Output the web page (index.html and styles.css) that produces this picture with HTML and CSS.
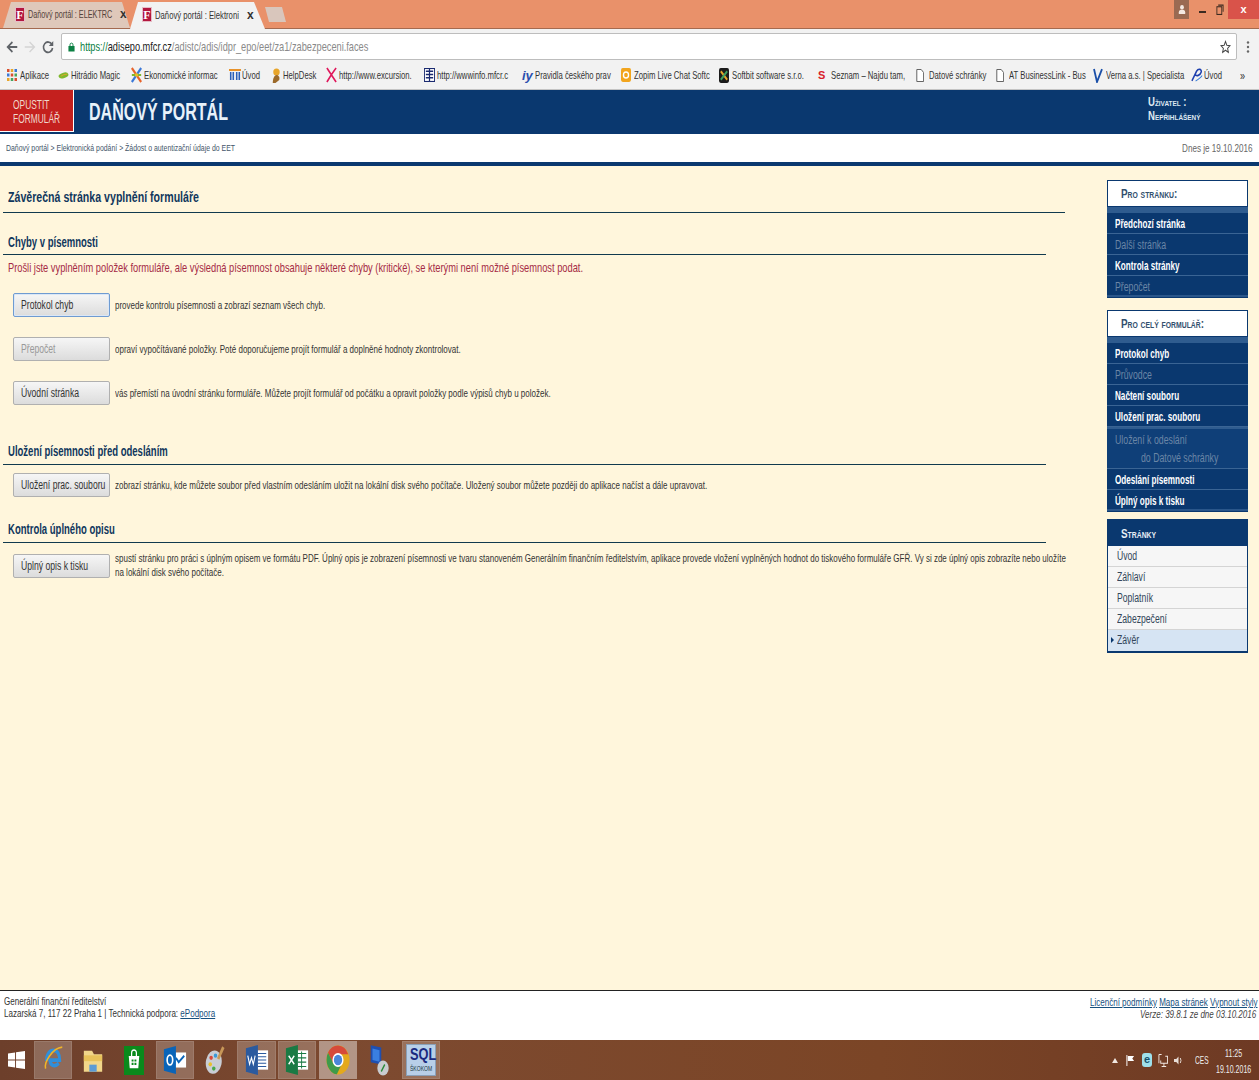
FILE: index.html
```html
<!DOCTYPE html>
<html lang="cs">
<head>
<meta charset="utf-8">
<title>Daňový portál</title>
<link rel="stylesheet" href="styles.css">
</head>
<body>
<div class="screen">
  <div class="tabstrip">
    <div class="tab tab-bg">
      <span class="favicon">F</span><span class="tab-title"><span class="sq">Daňový portál : ELEKTRC</span></span><span class="tab-x">x</span>
    </div>
    <div class="tab tab-active">
      <span class="favicon">F</span><span class="tab-title"><span class="sq">Daňový portál : Elektroni</span></span><span class="tab-x">x</span>
    </div>
    <div class="tab-new"></div>
    <div class="win-controls">
      <span class="win-user"><svg width="8" height="11" viewBox="0 0 10 12" preserveAspectRatio="none"><circle cx="5" cy="3.500" r="2.400" fill="#f4e9e2"/><path d="M1 11V9c0-2 2-2.600 4-2.600S9 7 9 9v2z" fill="#f4e9e2"/></svg></span>
      <span class="win-btn"><svg width="7" height="8" viewBox="0 0 8 8" preserveAspectRatio="none"><rect x="0" y="5" width="8" height="2" fill="#3c2a20"/></svg></span>
      <span class="win-btn"><svg width="8" height="11" viewBox="0 0 9 10" preserveAspectRatio="none"><rect x="1" y="2.500" width="5.500" height="7" fill="none" stroke="#3c2a20"/><path d="M2.500 1H8v6" fill="none" stroke="#3c2a20"/></svg></span>
      <span class="win-close">x</span>
    </div>
  </div>

  <div class="toolbar">
    <svg class="nav" width="14" height="16" viewBox="0 0 16 16" preserveAspectRatio="none"><path d="M14 8H3.500M8.500 3 3 8l5.500 5" fill="none" stroke="#5f6368" stroke-width="1.800"/></svg>
    <svg class="nav" width="14" height="16" viewBox="0 0 16 16" preserveAspectRatio="none"><path d="M2 8h10.500M7.500 3 13 8l-5.500 5" fill="none" stroke="#d4d4d4" stroke-width="1.600"/></svg>
    <svg class="nav" width="14" height="16" viewBox="0 0 16 16" preserveAspectRatio="none"><path d="M12.500 5.500A5.200 5.200 0 1 0 13.200 9" fill="none" stroke="#5f6368" stroke-width="1.800"/><path d="M14 2v5H9z" fill="#5f6368"/></svg>
    <div class="omnibox">
      <svg width="7" height="10" viewBox="0 0 8 10" preserveAspectRatio="none"><rect x="0.500" y="4" width="7" height="5.500" fill="#0b8043"/><path d="M2.300 4V2.800a1.700 1.700 0 0 1 3.400 0V4" fill="none" stroke="#0b8043"/></svg>
      <span class="url"><span class="sq"><span class="url-https">https://</span><span class="url-host">adisepo.mfcr.cz</span>/adistc/adis/idpr_epo/eet/za1/zabezpeceni.faces</span></span>
      <svg class="star" width="11" height="14" viewBox="0 0 14 14" preserveAspectRatio="none"><path d="m7 1.500 1.700 3.800 4 .4-3 2.700.9 4L7 10.300l-3.600 2.100.9-4-3-2.700 4-.4z" fill="none" stroke="#444" stroke-width="1.200"/></svg>
    </div>
    <svg class="menu-dots" width="4" height="14" viewBox="0 0 4 14"><circle cx="2" cy="2.500" r="1.200" fill="#666"/><circle cx="2" cy="7" r="1.200" fill="#666"/><circle cx="2" cy="11.500" r="1.200" fill="#666"/></svg>
  </div>

  <div class="bookmarks">
    <span class="bm bm-w0"><svg width="10" height="12" viewBox="0 0 12 12" preserveAspectRatio="none"><rect width="3" height="3" fill="#d8502f"/><rect x="4.500" width="3" height="3" fill="#e8a52a"/><rect x="9" width="3" height="3" fill="#3b78d8"/><rect y="4.500" width="3" height="3" fill="#3b78d8"/><rect x="4.500" y="4.500" width="3" height="3" fill="#d8502f"/><rect x="9" y="4.500" width="3" height="3" fill="#46a35e"/><rect y="9" width="3" height="3" fill="#e8a52a"/><rect x="4.500" y="9" width="3" height="3" fill="#46a35e"/><rect x="9" y="9" width="3" height="3" fill="#d8502f"/></svg><span class="sq">Aplikace</span></span>
    <span class="bm bm-w1"><svg width="11" height="10" viewBox="0 0 12 12" preserveAspectRatio="none"><ellipse cx="6" cy="6.500" rx="5.500" ry="3.200" fill="#7fb82e" transform="rotate(-18 6 6.500)"/><path d="M3 7.500q3-2.500 7-2.500" stroke="#e8a52a" fill="none"/></svg><span class="sq">Hitrádio Magic</span></span>
    <span class="bm bm-w2"><svg width="11" height="16" viewBox="0 0 13 16" preserveAspectRatio="none"><path d="M1 1 12 15" stroke="#e8632a" stroke-width="2.500"/><path d="M12 1 1 15" stroke="#3b78d8" stroke-width="2.500"/><path d="M1 8h11" stroke="#7fb82e" stroke-width="2"/><circle cx="6.500" cy="8" r="2" fill="#e8b82a"/></svg><span class="sq">Ekonomické informac</span></span>
    <span class="bm bm-w3"><svg width="12" height="12" viewBox="0 0 14 12" preserveAspectRatio="none"><path d="M0 1h14" stroke="#e8922a" stroke-width="2"/><path d="M2 3v8M5 3v8M9 3v8M12 3v8" stroke="#2a5fb8" stroke-width="1.800"/></svg><span class="sq">Úvod</span></span>
    <span class="bm bm-w4"><svg width="12" height="15" viewBox="0 0 13 15" preserveAspectRatio="none"><circle cx="7" cy="4" r="3.500" fill="#e8a52a"/><path d="M3 15c0-5 2-8 4-8s4 2 3 5l-4 3z" fill="#9c6a2a"/></svg><span class="sq">HelpDesk</span></span>
    <span class="bm bm-w5"><svg width="11" height="16" viewBox="0 0 12 16" preserveAspectRatio="none"><path d="M1 1q5 7 10 14M11 1Q6 7 1 15" fill="none" stroke="#e0185c" stroke-width="1.800"/></svg><span class="sq">http://www.excursion.</span></span>
    <span class="bm bm-w6"><svg width="11" height="14" viewBox="0 0 12 13" preserveAspectRatio="none"><rect x=".5" y=".5" width="11" height="12" fill="#fff" stroke="#1a2a70"/><path d="M2 3h8M6 1v11M2 6h8M2 9h8" stroke="#1a2a70" stroke-width="1.300"/></svg><span class="sq">http://wwwinfo.mfcr.c</span></span>
    <span class="bm bm-w7"><span class="iy">iy</span><span class="sq">Pravidla českého prav</span></span>
    <span class="bm bm-w8"><svg width="10" height="14" viewBox="0 0 11 13" preserveAspectRatio="none"><rect width="11" height="13" rx="2" fill="#f2a51e"/><circle cx="5.500" cy="6.500" r="2.800" fill="none" stroke="#fff" stroke-width="1.500"/></svg><span class="sq">Zopim Live Chat Softc</span></span>
    <span class="bm bm-w9"><svg width="10" height="15" viewBox="0 0 11 14" preserveAspectRatio="none"><rect width="11" height="14" rx="2" fill="#1c1c1c"/><path d="M2 3l7 8" stroke="#e8a52a" stroke-width="2"/><path d="M9 3l-7 8" stroke="#3fa05e" stroke-width="2"/></svg><span class="sq">Softbit software s.r.o.</span></span>
    <span class="bm bm-w10"><span class="seznam">S</span><span class="sq">Seznam – Najdu tam,</span></span>
    <span class="bm bm-w11"><svg width="8" height="13" viewBox="0 0 10 13" preserveAspectRatio="none"><path d="M1 .5h5.500L9.500 3.500v9H1z" fill="#fff" stroke="#555"/></svg><span class="sq">Datové schránky</span></span>
    <span class="bm bm-w12"><svg width="8" height="13" viewBox="0 0 10 13" preserveAspectRatio="none"><path d="M1 .5h5.500L9.500 3.500v9H1z" fill="#fff" stroke="#555"/></svg><span class="sq">AT BusinessLink - Bus</span></span>
    <span class="bm bm-w13"><svg width="10" height="15" viewBox="0 0 10 14" preserveAspectRatio="none"><path d="M1 1l3 12 5-12" fill="none" stroke="#1a4fa8" stroke-width="1.800"/></svg><span class="sq">Verna a.s. | Specialista</span></span>
    <span class="bm bm-w14"><svg width="12" height="14" viewBox="0 0 13 13" preserveAspectRatio="none"><path d="M1 12 6 3c2-3 6-2 5 1S6 8 4 6" fill="none" stroke="#1d3fae" stroke-width="1.600"/><path d="M5 12c2-1 6-3 7-5" fill="none" stroke="#3a7fd8"/></svg><span class="sq">Úvod</span></span>
    <span class="bm-more"><span class="sq">»</span></span>
  </div>

  <header class="site-head">
    <a class="leave"><span class="sq">OPUSTIT<br>FORMULÁŘ</span></a>
    <h1 class="portal"><span class="sq">DAŇOVÝ PORTÁL</span></h1>
    <div class="user"><span class="sq">Uživatel :<br>Nepřihlášený</span></div>
  </header>

  <div class="crumbs">
    <span class="crumb-path"><span class="sq">Daňový portál &gt; Elektronická podání &gt; Žádost o autentizační údaje do EET</span></span>
    <span class="today"><span class="sq sq-r">Dnes je 19.10.2016</span></span>
  </div>

  <div class="body-wrap">
    <main class="main">
      <h2 class="page-title"><span class="sq">Závěrečná stránka vyplnění formuláře</span></h2>

      <section class="sec sec-errors">
        <h3 class="sec-title"><span class="sq">Chyby v písemnosti</span></h3>
        <p class="error-msg"><span class="sq">Prošli jste vyplněním položek formuláře, ale výsledná písemnost obsahuje některé chyby (kritické), se kterými není možné písemnost podat.</span></p>
        <div class="rows">
          <div class="row"><span class="btn btn-focus"><span class="sq">Protokol chyb</span></span><p class="desc"><span class="sq">provede kontrolu písemnosti a zobrazí seznam všech chyb.</span></p></div>
          <div class="row"><span class="btn btn-off"><span class="sq">Přepočet</span></span><p class="desc"><span class="sq">opraví vypočítávané položky. Poté doporučujeme projít formulář a doplněné hodnoty zkontrolovat.</span></p></div>
          <div class="row"><span class="btn"><span class="sq">Úvodní stránka</span></span><p class="desc"><span class="sq">vás přemístí na úvodní stránku formuláře. Můžete projít formulář od počátku a opravit položky podle výpisů chyb u položek.</span></p></div>
        </div>
      </section>

      <section class="sec sec-save">
        <h3 class="sec-title"><span class="sq">Uložení písemnosti před odesláním</span></h3>
        <div class="row"><span class="btn"><span class="sq">Uložení prac. souboru</span></span><p class="desc"><span class="sq">zobrazí stránku, kde můžete soubor před vlastním odesláním uložit na lokální disk svého počítače. Uložený soubor můžete později do aplikace načíst a dále upravovat.</span></p></div>
      </section>

      <section class="sec sec-check">
        <h3 class="sec-title"><span class="sq">Kontrola úplného opisu</span></h3>
        <div class="row"><span class="btn"><span class="sq">Úplný opis k tisku</span></span><p class="desc"><span class="sq">spustí stránku pro práci s úplným opisem ve formátu PDF. Úplný opis je zobrazení písemnosti ve tvaru stanoveném Generálním finančním ředitelstvím, aplikace provede vložení vyplněných hodnot do tiskového formuláře GFŘ. Vy si zde úplný opis zobrazíte nebo uložíte<br>na lokální disk svého počítače.</span></p></div>
      </section>
    </main>

    <aside class="side">
      <nav class="panel panel-page">
        <div class="panel-head"><span class="sq">Pro stránku:</span></div>
        <ul class="panel-list">
          <li><span class="sq">Předchozí stránka</span></li>
          <li class="off"><span class="sq">Další stránka</span></li>
          <li><span class="sq">Kontrola stránky</span></li>
          <li class="off"><span class="sq">Přepočet</span></li>
        </ul>
      </nav>
      <nav class="panel panel-form">
        <div class="panel-head"><span class="sq">Pro celý formulář:</span></div>
        <ul class="panel-list">
          <li><span class="sq">Protokol chyb</span></li>
          <li class="off"><span class="sq">Průvodce</span></li>
          <li><span class="sq">Načtení souboru</span></li>
          <li><span class="sq">Uložení prac. souboru</span></li>
          <li class="off two-line"><span class="sq">Uložení k odeslání</span><br><span class="indent"><span class="sq">do Datové schránky</span></span></li>
          <li><span class="sq">Odeslání písemnosti</span></li>
          <li><span class="sq">Úplný opis k tisku</span></li>
        </ul>
      </nav>
      <nav class="pages">
        <div class="pages-head"><span class="sq">Stránky</span></div>
        <ul class="pages-list">
          <li><span class="sq">Úvod</span></li>
          <li><span class="sq">Záhlaví</span></li>
          <li><span class="sq">Poplatník</span></li>
          <li><span class="sq">Zabezpečení</span></li>
          <li class="current"><span class="sq">Závěr</span></li>
        </ul>
      </nav>
    </aside>
  </div>

  <footer class="foot">
    <div class="foot-left"><span class="sq">Generální finanční ředitelství<br>Lazarská 7, 117 22 Praha 1 | Technická podpora: <a>ePodpora</a></span></div>
    <div class="foot-right">
      <div class="foot-links"><span class="sq sq-r"><a>Licenční podmínky</a> <a>Mapa stránek</a> <a>Vypnout styly</a></span></div>
      <div class="version"><span class="sq sq-r">Verze: 39.8.1 ze dne 03.10.2016</span></div>
    </div>
  </footer>

  <div class="taskbar">
    <span class="task task-start"><svg width="17" height="18" viewBox="0 0 18 18" preserveAspectRatio="none"><path d="M0 2.500 7.500 1.400v7.100H0zM8.500 1.300 18 0v8.500H8.500zM0 9.500h7.500v7.100L0 15.500zM8.500 9.500H18V18l-9.500-1.300z" fill="#fff"/></svg></span>
    <span class="task task-on t-ie"><svg width="21" height="30" viewBox="0 0 24 28" preserveAspectRatio="none"><path d="M4 15c0-7 4-10 8-10s7 3 7 9H8c0 5 5 7 10 3" fill="none" stroke="#2f8fdc" stroke-width="3.500"/><path d="M3 22C1 17 10 3 22 2" fill="none" stroke="#f0b429" stroke-width="1.800"/></svg></span>
    <span class="task t-files"><svg width="22" height="28" viewBox="0 0 24 24" preserveAspectRatio="none"><path d="M2 4h9l2 3h9v15H2z" fill="#f1d68a"/><rect x="2" y="8" width="20" height="5" fill="#e8c25a"/><path d="M8 22v-6h8v6" fill="#5b9bd5"/></svg></span>
    <span class="task t-store"><svg width="20" height="29" viewBox="0 0 21 26" preserveAspectRatio="none"><rect width="21" height="26" fill="#0a8a1c"/><path d="M5 9h11l-1 11H6z" fill="#fff"/><path d="M8 9V6a2.500 2.500 0 0 1 5 0v3" fill="none" stroke="#fff" stroke-width="1.300"/><path d="M8 12h2v2H8zM11 12h2v2h-2zM8 15h2v2H8zM11 15h2v2h-2z" fill="#0a8a1c"/></svg></span>
    <span class="task task-on t-outlook"><svg width="24" height="28" viewBox="0 0 26 26" preserveAspectRatio="none"><rect x="12" y="6" width="13" height="14" fill="#fff"/><path d="m14 11 3 4 6-6" fill="none" stroke="#0a64b8" stroke-width="2"/><path d="M1 3 14 0v26L1 23z" fill="#0a64b8"/><ellipse cx="7.500" cy="13" rx="3" ry="4.500" fill="none" stroke="#fff" stroke-width="1.800"/></svg></span>
    <span class="task t-paint"><svg width="21" height="30" viewBox="0 0 24 28" preserveAspectRatio="none"><ellipse cx="10" cy="16" rx="9" ry="11" fill="#c9cdd4" transform="rotate(15 10 16)"/><circle cx="7" cy="12" r="2" fill="#d84a3a"/><circle cx="12" cy="10" r="2" fill="#3a9ad8"/><circle cx="6" cy="18" r="2" fill="#e8c02a"/><circle cx="10" cy="22" r="2" fill="#4aa84a"/><path d="M15 13 21 2" stroke="#c89858" stroke-width="3"/></svg></span>
    <span class="task task-on t-word"><svg width="24" height="30" viewBox="0 0 26 28" preserveAspectRatio="none"><path d="M12 5h13v18H12z" fill="#fff"/><path d="M14 8h9M14 11h9M14 14h9M14 17h9M14 20h9" stroke="#2b5a9e"/><path d="M1 3 14 0v28L1 25z" fill="#2b5a9e"/><path d="m3 10 2 8 2-6 2 6 2-8" fill="none" stroke="#fff" stroke-width="1.200"/></svg></span>
    <span class="task task-on t-excel"><svg width="24" height="30" viewBox="0 0 26 28" preserveAspectRatio="none"><path d="M12 5h13v18H12z" fill="#fff"/><path d="M14 8h9M14 12h9M14 16h9M14 20h9M18 6v16" stroke="#1a7a44"/><path d="M1 3 14 0v28L1 25z" fill="#1a7a44"/><path d="m4 10 6 8m0-8-6 8" stroke="#fff" stroke-width="1.500"/></svg></span>
    <span class="task task-active t-chrome"><svg width="24" height="30" viewBox="0 0 26 26" preserveAspectRatio="none"><circle cx="13" cy="13" r="12.500" fill="#e4a91c"/><path d="M13 .5A12.500 12.500 0 0 0 2.200 6.800L7.800 16 13 8h11a12.500 12.500 0 0 0-11-7.500z" fill="#d64a3a"/><path d="M2.200 6.800A12.500 12.500 0 0 0 11.800 25.400L16.800 17 8 16z" fill="#3e9a4a"/><circle cx="13" cy="13" r="6" fill="#fff"/><circle cx="13" cy="13" r="4.500" fill="#4a86d8"/></svg></span>
    <span class="task t-net"><svg width="21" height="32" viewBox="0 0 24 28" preserveAspectRatio="none"><path d="M2 1 14 3v15L2 16z" fill="#1f4fb0"/><path d="M4 4l8 1.500v10L4 14z" fill="#3a7fe0"/><circle cx="16" cy="21" r="6.500" fill="#c9ccd0"/><path d="M14 24l4-6" stroke="#2a8a3a" stroke-width="1.500"/></svg></span>
    <span class="task task-on t-sql"><span class="sql-box"><span class="sql-big"><span class="sq">SQL</span></span><span class="sql-small"><span class="sq">ŠKOKOM</span></span></span></span>
    <div class="tray">
      <svg class="tray-up" width="6" height="5" viewBox="0 0 6 5"><path d="M0 5 3 0l3 5z" fill="#f1e8e2"/></svg>
      <svg class="tray-flag" width="9" height="11" viewBox="0 0 10 11" preserveAspectRatio="none"><path d="M1 0v11" stroke="#fff"/><path d="M2 1h7L7 3.500 9 6H2z" fill="#fff"/></svg>
      <span class="tray-e">e</span>
      <svg class="tray-net" width="10" height="13" viewBox="0 0 11 12" preserveAspectRatio="none"><path d="M1 .5h3M1 .5v8M8 2h2.500v6.500H3V6M6.500 9v2.500M4 11.500h5" fill="none" stroke="#f1e8e2"/></svg>
      <svg class="tray-vol" width="9" height="11" viewBox="0 0 10 11" preserveAspectRatio="none"><path d="M0 4h2.500L5 1.500v8L2.500 7H0z" fill="#e8ddd6"/><path d="M7 3q1.500 2.500 0 5" fill="none" stroke="#e8ddd6"/></svg>
      <span class="tray-lang"><span class="sq">CES</span></span>
      <div class="tray-clock"><span class="sq">11:25<br>19.10.2016</span></div>
    </div>
  </div>
</div>
</body>
</html>
```
FILE: styles.css
```css
* { box-sizing: border-box; }
html, body { margin: 0; padding: 0; }
body {
  font-family: "Liberation Sans", Arial, sans-serif;
  background: #fff6dc;
  color: #222;
}
ul { list-style: none; margin: 0; padding: 0; }
p, h1, h2, h3 { margin: 0; }
.screen {
  width: 1259px;
  height: 1080px;
  display: flex;
  flex-direction: column;
  overflow: hidden;
}

/* The reference is a picture squeezed sideways: text is narrowed by --sx */
.sq {
  display: inline-block;
  white-space: nowrap;
  transform: scaleX(var(--sx, .72));
  transform-origin: 0 50%;
}
.sq-r { transform-origin: 100% 50%; }

/* tab strip */
.tabstrip {
  height: 29px;
  flex: none;
  background: #e9916a;
  border-bottom: 1px solid #a46a50;
  display: flex;
  align-items: flex-end;
  padding-left: 3px;
}
.tab {
  height: 26px;
  display: flex;
  align-items: center;
  padding: 0 0 2px 12px;
  font-size: 11px;
}
.tab-bg { background: #dfc8ba; color: #54433a; width: 127px; --sx: .66; clip-path: polygon(8px 0, 119px 0, 127px 100%, 0 100%); }
.tab-active { background: #f2f2f2; color: #333; width: 135px; height: 27px; margin-bottom: -1px; --sx: .70; clip-path: polygon(8px 0, 124px 0, 135px 100%, 0 100%); }
.favicon {
  width: 10px;
  height: 15px;
  flex: none;
  background: #b3173f;
  color: #fff;
  font: bold 12px/14px "Liberation Serif", serif;
  text-align: center;
  margin-right: 3px;
  border: 1px solid #e6bcc6;
}
.tab-title { width: 92px; flex: none; }
.tab-x { font-size: 12px; font-weight: bold; color: #333; }
.tab-new {
  width: 21px;
  height: 15px;
  margin: 0 0 6px 0;
  background: #d9c6bc;
  clip-path: polygon(0 0, 17px 0, 100% 100%, 4px 100%);
}
.win-controls {
  margin-left: auto;
  align-self: flex-start;
  display: flex;
  height: 19px;
  align-items: center;
}
.win-user { width: 15px; height: 19px; background: #9a6a52; display: flex; align-items: center; justify-content: center; margin-right: 5px; }
.win-btn { width: 17px; height: 19px; display: flex; align-items: center; justify-content: center; }
.win-close { width: 31px; height: 19px; background: #d9534a; color: #fff; text-align: center; font-size: 11px; line-height: 18px; font-weight: bold; }

/* toolbar */
.toolbar {
  height: 32px;
  flex: none;
  background: #f2f2f2;
  display: flex;
  align-items: center;
  padding: 3px 0 0 5px;
}
.nav { flex: none; margin-right: 4px; }
.omnibox {
  margin-left: 2px;
  width: 1176px;
  height: 27px;
  background: #fff;
  border: 1px solid #bdbdbd;
  border-radius: 2px;
  display: flex;
  align-items: center;
  padding: 0 5px 0 6px;
  font-size: 13px;
  color: #8a8a8a;
  --sx: .71;
}
.url { margin-left: 5px; }
.url-https { color: #0b8043; }
.url-host { color: #222; }
.star { margin-left: auto; }
.menu-dots { margin-left: 9px; flex: none; }

/* bookmarks */
.bookmarks {
  height: 29px;
  flex: none;
  background: #f2f2f2;
  border-bottom: 1px solid #c4c4c4;
  display: flex;
  align-items: center;
  padding-left: 7px;
  font-size: 11px;
  color: #333;
  --sx: .70;
}
.bm { display: grid; grid-template-columns: 13px 1fr; align-items: center; flex: none; }
.bm-w0 { width: 51px; }
.bm-w1 { width: 73px; }
.bm-w2 { width: 98px; }
.bm-w3 { width: 41px; }
.bm-w4 { width: 56px; }
.bm-w5 { width: 98px; }
.bm-w6 { width: 98px; }
.bm-w7 { width: 99px; }
.bm-w8 { width: 98px; }
.bm-w9 { width: 99px; }
.bm-w10 { width: 98px; }
.bm-w11 { width: 80px; }
.bm-w12 { width: 97px; }
.bm-w13 { width: 98px; }
.bm-w14 { width: 49px; }
.bm-more { font-size: 13px; }
.iy { color: #2a4fae; font: italic bold 13px "Liberation Sans", sans-serif; }
.seznam { color: #d8202a; font: bold 11px "Liberation Sans", sans-serif; }

/* header */
.site-head {
  height: 44px;
  flex: none;
  background: #0a386f;
  display: flex;
  color: #fff;
}
.leave {
  width: 74px;
  height: 42px;
  background: #c4201e;
  border-right: 1px solid #fff;
  border-bottom: 1px solid #fff;
  color: #f0d8cc;
  font-size: 12px;
  line-height: 14px;
  padding: 8px 0 0 13px;
  flex: none;
  --sx: .70;
}
.portal {
  margin-left: 15px;
  font-size: 24px;
  line-height: 43px;
  font-weight: bold;
  color: #e8f2fa;
  --sx: .668;
}
.user {
  margin-left: auto;
  width: 111px;
  font-size: 12px;
  font-variant: small-caps;
  font-weight: bold;
  line-height: 14px;
  padding-top: 5px;
  color: #dfe8f2;
  --sx: .80;
}

/* breadcrumb */
.crumbs {
  height: 32px;
  flex: none;
  background: #fff;
  border-bottom: 4px solid #0a386f;
  display: flex;
  justify-content: space-between;
  align-items: center;
  padding: 0 7px 0 6px;
  color: #44566a;
}
.crumb-path { font-size: 9px; --sx: .768; }
.today { font-size: 11px; color: #666; --sx: .737; }

/* body */
.body-wrap {
  flex: 1;
  min-height: 0;
  display: flex;
  background: #fff6dc;
}
.main { width: 1107px; flex: none; padding-top: 14px; }
.page-title {
  margin: 0 42px 0 3px;
  padding: 8px 0 0 5px;
  height: 33px;
  border-bottom: 1px solid #113a4e;
  font-size: 15px;
  line-height: 17px;
  color: #10375c;
  --sx: .707;
}
.sec { margin-right: 61px; }
.sec-title {
  margin-left: 3px;
  padding: 0 0 0 5px;
  border-bottom: 1px solid #113a4e;
  font-size: 14px;
  line-height: 16px;
  height: 22px;
  color: #10375c;
  font-weight: bold;
  --sx: .68;
}
.sec-errors .sec-title { padding-top: 1px; }
.sec-errors { margin-top: 20px; }
.error-msg { margin: 5px 0 0 8px; font-size: 13px; line-height: 15px; color: #a52a45; --sx: .715; }
.rows { margin-top: 18px; display: flex; flex-direction: column; gap: 20px; }
.sec-save { margin-top: 38px; }
.sec-check { margin-top: 24px; }
.sec-save .row { margin-top: 8px; }
.sec-check .row { margin-top: 9px; }
.sec-check .desc { margin-top: -1px; }
.row {
  margin-left: 13px;
  display: flex;
  align-items: center;
  gap: 5px;
}
.btn {
  width: 97px;
  height: 24px;
  flex: none;
  border: 1px solid #b0b0b0;
  border-radius: 2px;
  background: linear-gradient(#f6f6f6, #dcdcdc);
  font-size: 12.500px;
  line-height: 22px;
  padding-left: 7px;
  color: #333;
  --sx: .69;
}
.btn-focus { border-color: #6f9bd1; box-shadow: inset 0 0 0 1px #dbe7f6; }
.btn-off { color: #999; }
.desc { flex: none; font-size: 11px; line-height: 14px; color: #333; --sx: .727; }

/* side */
.side { width: 141px; flex: none; padding-top: 14px; display: flex; flex-direction: column; }
.panel { background: #0a386f; color: #fff; padding-bottom: 1px; }
.panel-form { margin-top: 12px; }
.panel-head {
  height: 27px;
  background: #fff;
  border: 1px solid #0a386f;
  color: #33506e;
  font-size: 13px;
  font-variant: small-caps;
  font-weight: bold;
  line-height: 26px;
  padding-left: 13px;
  --sx: .76;
}
.panel-list { border-top: 6px solid #2f5c8f; --sx: .65; }
.panel-list li {
  height: 21px;
  border-bottom: 1px solid #3a6494;
  font-size: 12.500px;
  font-weight: bold;
  line-height: 22px;
  padding-left: 8px;
}
.panel-list li:last-child { border-bottom: 2px solid #2a568a; }
.panel-list .off { color: #6b86a6; font-weight: normal; --sx: .70; }
.panel-list .two-line { height: 42px; background: #0f3f78; border-top: 2px solid #2f5c8f; padding-top: 2px; line-height: 18px; }
.indent { padding-left: 26px; }
.pages { margin-top: 7px; border: 1px solid #0a386f; border-bottom-width: 2px; }
.pages-head {
  height: 26px;
  background: #0a386f;
  color: #e8eff6;
  font-size: 13px;
  font-variant: small-caps;
  font-weight: bold;
  line-height: 27px;
  padding-left: 13px;
  --sx: .76;
}
.pages-list li {
  height: 21px;
  background: #f6f6f6;
  border-bottom: 1px solid #d4d4d4;
  font-size: 12px;
  line-height: 20px;
  padding-left: 9px;
  color: #33465a;
  --sx: .72;
}
.pages-list .current {
  background: #d6e4f3;
  border-bottom: 0;
  position: relative;
}
.pages-list .current::before {
  content: "";
  position: absolute;
  left: 3px;
  top: 7px;
  border-left: 3px solid #0a386f;
  border-top: 3px solid transparent;
  border-bottom: 3px solid transparent;
}

/* footer */
.foot {
  height: 50px;
  flex: none;
  background: #fff;
  border-top: 1px solid #222;
  display: flex;
  justify-content: space-between;
  padding: 4px 1px 0 4px;
  font-size: 11px;
  line-height: 12px;
  color: #333;
  --sx: .73;
}
.foot a { color: #17507e; text-decoration: underline; }
.foot-right { text-align: right; padding-top: 1px; }
.version { font-style: italic; color: #444; margin-right: 2px; }

/* taskbar */
.taskbar {
  height: 40px;
  flex: none;
  background: linear-gradient(90deg, #6d3f2b, #7d4a30 30%, #7b4526 70%, #6e3a24);
  display: flex;
  align-items: center;
  padding-left: 7px;
  color: #eee;
}
.task { height: 38px; display: flex; align-items: center; justify-content: center; flex: none; }
.task-start { width: 19px; margin-right: 8px; }
.task-on { background: rgba(255,255,255,.22); box-shadow: inset 0 0 0 1px rgba(255,255,255,.1); }
.task-active { background: rgba(255,255,255,.42); }
.t-ie { width: 38px; }
.t-files { width: 40px; margin-left: 1px; }
.t-store { width: 42px; }
.t-outlook { width: 38px; margin-left: 1px; }
.t-paint { width: 43px; }
.t-word { width: 39px; margin-left: 0; }
.t-excel { width: 38px; margin-left: 2px; }
.t-chrome { width: 38px; margin-left: 3px; }
.t-net { width: 41px; margin-left: 2px; }
.t-sql { width: 38px; margin-left: 2px; }
.sql-box {
  width: 30px;
  height: 32px;
  background: #b8cfe8;
  border: 1px solid #8aa0b8;
  display: flex;
  flex-direction: column;
  align-items: flex-start;
  padding-left: 3px;
}
.sql-big { font: bold 17px/19px "Liberation Sans", sans-serif; color: #1a2a80; --sx: .75; }
.sql-small { font-size: 7px; line-height: 9px; color: #1a3a40; --sx: .72; }
.tray {
  margin-left: auto;
  margin-right: 8px;
  display: flex;
  align-items: center;
  font-size: 11px;
}
.tray-flag { margin-left: 8px; }
.tray-e {
  width: 10px;
  height: 14px;
  margin-left: 7px;
  background: #9fe0ea;
  border-radius: 3px;
  color: #16506a;
  font: bold 11px/13px "Liberation Sans", sans-serif;
  text-align: center;
}
.tray-net { margin-left: 6px; }
.tray-vol { margin-left: 6px; }
.tray-lang { width: 12px; margin-left: 12px; --sx: .6; }
.tray-clock { width: 35px; margin-left: 9px; padding-top: 2px; text-align: center; line-height: 16px; --sx: .64; }
```
